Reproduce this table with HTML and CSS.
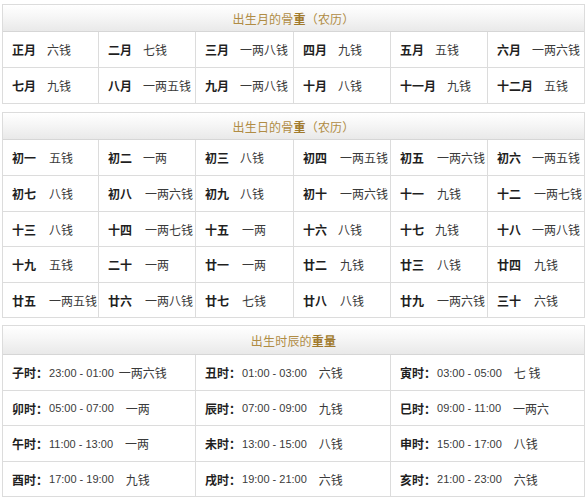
FILE: index.html
```html
<!DOCTYPE html>
<html lang="zh">
<head>
<meta charset="utf-8">
<link rel="stylesheet" href="styles.css">
</head>
<body>
<section class="panel">
  <div class="head">出生月的骨<b>重</b>（农历）</div>
  <div class="grid six r2">
    <div class="cell"><span class="k">正月</span><span class="v">六钱</span></div>
    <div class="cell"><span class="k">二月</span><span class="v">七钱</span></div>
    <div class="cell"><span class="k">三月</span><span class="v">一两八钱</span></div>
    <div class="cell"><span class="k">四月</span><span class="v">九钱</span></div>
    <div class="cell"><span class="k">五月</span><span class="v">五钱</span></div>
    <div class="cell"><span class="k">六月</span><span class="v">一两六钱</span></div>
    <div class="cell"><span class="k">七月</span><span class="v">九钱</span></div>
    <div class="cell"><span class="k">八月</span><span class="v">一两五钱</span></div>
    <div class="cell"><span class="k">九月</span><span class="v">一两八钱</span></div>
    <div class="cell"><span class="k">十月</span><span class="v">八钱</span></div>
    <div class="cell"><span class="k">十一月</span><span class="v">九钱</span></div>
    <div class="cell"><span class="k">十二月</span><span class="v">五钱</span></div>
  </div>
</section>

<section class="panel">
  <div class="head">出生日的骨<b>重</b>（农历）</div>
  <div class="grid six r5">
    <div class="cell"><span class="k">初一</span><span class="v w">五钱</span></div>
    <div class="cell"><span class="k">初二</span><span class="v">一两</span></div>
    <div class="cell"><span class="k">初三</span><span class="v">八钱</span></div>
    <div class="cell"><span class="k">初四</span><span class="v w">一两五钱</span></div>
    <div class="cell"><span class="k">初五</span><span class="v w">一两六钱</span></div>
    <div class="cell"><span class="k">初六</span><span class="v">一两五钱</span></div>
    <div class="cell"><span class="k">初七</span><span class="v w">八钱</span></div>
    <div class="cell"><span class="k">初八</span><span class="v w">一两六钱</span></div>
    <div class="cell"><span class="k">初九</span><span class="v">八钱</span></div>
    <div class="cell"><span class="k">初十</span><span class="v w">一两六钱</span></div>
    <div class="cell"><span class="k">十一</span><span class="v w">九钱</span></div>
    <div class="cell"><span class="k">十二</span><span class="v w">一两七钱</span></div>
    <div class="cell"><span class="k">十三</span><span class="v w">八钱</span></div>
    <div class="cell"><span class="k">十四</span><span class="v w">一两七钱</span></div>
    <div class="cell"><span class="k">十五</span><span class="v w">一两</span></div>
    <div class="cell"><span class="k">十六</span><span class="v">八钱</span></div>
    <div class="cell"><span class="k">十七</span><span class="v">九钱</span></div>
    <div class="cell"><span class="k">十八</span><span class="v">一两八钱</span></div>
    <div class="cell"><span class="k">十九</span><span class="v w">五钱</span></div>
    <div class="cell"><span class="k">二十</span><span class="v w">一两</span></div>
    <div class="cell"><span class="k">廿一</span><span class="v w">一两</span></div>
    <div class="cell"><span class="k">廿二</span><span class="v w">九钱</span></div>
    <div class="cell"><span class="k">廿三</span><span class="v w">八钱</span></div>
    <div class="cell"><span class="k">廿四</span><span class="v w">九钱</span></div>
    <div class="cell"><span class="k">廿五</span><span class="v w">一两五钱</span></div>
    <div class="cell"><span class="k">廿六</span><span class="v w">一两八钱</span></div>
    <div class="cell"><span class="k">廿七</span><span class="v w">七钱</span></div>
    <div class="cell"><span class="k">廿八</span><span class="v w">八钱</span></div>
    <div class="cell"><span class="k">廿九</span><span class="v w">一两六钱</span></div>
    <div class="cell"><span class="k">三十</span><span class="v w">六钱</span></div>
  </div>
</section>

<section class="panel">
  <div class="head tall">出生时辰的<b>重量</b></div>
  <div class="grid three r4">
    <div class="cell"><span class="k">子时：</span><span class="t">23:00 - 01:00</span><span class="v n">一两六钱</span></div>
    <div class="cell"><span class="k">丑时：</span><span class="t">01:00 - 03:00</span><span class="v">六钱</span></div>
    <div class="cell"><span class="k">寅时：</span><span class="t">03:00 - 05:00</span><span class="v">七 钱</span></div>
    <div class="cell"><span class="k">卯时：</span><span class="t">05:00 - 07:00</span><span class="v">一两</span></div>
    <div class="cell"><span class="k">辰时：</span><span class="t">07:00 - 09:00</span><span class="v">九钱</span></div>
    <div class="cell"><span class="k">巳时：</span><span class="t">09:00 - 11:00</span><span class="v">一两六</span></div>
    <div class="cell"><span class="k">午时：</span><span class="t">11:00 - 13:00</span><span class="v">一两</span></div>
    <div class="cell"><span class="k">未时：</span><span class="t">13:00 - 15:00</span><span class="v">八钱</span></div>
    <div class="cell"><span class="k">申时：</span><span class="t">15:00 - 17:00</span><span class="v">八钱</span></div>
    <div class="cell"><span class="k">酉时：</span><span class="t">17:00 - 19:00</span><span class="v">九钱</span></div>
    <div class="cell"><span class="k">戌时：</span><span class="t">19:00 - 21:00</span><span class="v">六钱</span></div>
    <div class="cell"><span class="k">亥时：</span><span class="t">21:00 - 23:00</span><span class="v">六钱</span></div>
  </div>
</section>
</body>
</html>
```

FILE: styles.css
```css
* { box-sizing: border-box; }
html, body { margin: 0; padding: 0; background: #fff; }
body {
  padding: 4px 3px 0 2px;
  font-family: "Noto Sans CJK SC", "Liberation Sans", sans-serif;
  font-size: 12px;
  color: #333;
  display: flex;
  flex-direction: column;
  gap: 8px;
}
.panel {
  border: 1px solid #dcdcdc;
  width: 583px;
}
.panel + .panel + .panel { margin-top: -1px; }
.head {
  height: 27px;
  display: flex;
  align-items: center;
  justify-content: center;
  background: linear-gradient(#ffffff, #f6f6f6 45%, #e9e9e9);
  border-bottom: 1px solid #d6d6d6;
  color: #b08c44;
  font-size: 12px;
  letter-spacing: 0.2px;
}
.head.tall { height: 29px; }
.head b { font-weight: bold; color: #a17a2c; }
.grid { display: grid; }
.six { grid-template-columns: 96px 97px 98px 97px 97px 96px; }
.three { grid-template-columns: 193px 195px 193px; }
.r2 { grid-template-rows: 35px 36px; }
.r5 { grid-template-rows: 35px 36px 35px 36px 35px; }
.r4 { grid-template-rows: 35px 35px 36px 35px; }
.cell {
  display: flex;
  align-items: center;
  padding-left: 9px;
  border-right: 1px solid #dcdcdc;
  border-top: 1px solid #dcdcdc;
  white-space: nowrap;
  overflow: visible;
}
.six .cell:nth-child(-n+6),
.three .cell:nth-child(-n+3) { border-top: none; }
.six .cell:nth-child(6n),
.three .cell:nth-child(3n) { border-right: none; }
.k {
  font-weight: bold;
  color: #1f1f1f;
  font-size: 12px;
}
.v {
  margin-left: 11px;
  color: #3a3a3a;
  font-size: 12px;
}
.v.w { margin-left: 13px; }
.t {
  font-family: "Liberation Sans", Arial, sans-serif;
  font-size: 11px;
  color: #3a3a3a;
  margin-left: 1px;
}
.three .v { margin-left: 12px; }
.three .v.n { margin-left: 5px; }
```
